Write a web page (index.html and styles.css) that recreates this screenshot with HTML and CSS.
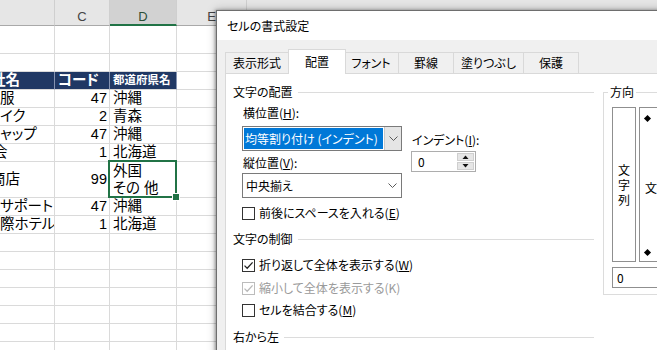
FILE: index.html
```html
<!DOCTYPE html>
<html lang="ja">
<head>
<meta charset="utf-8">
<title>セルの書式設定</title>
<link rel="stylesheet" href="styles.css">
</head>
<body>
<div class="sheet">
  <div class="row colhead">
    <div class="cell"></div><div class="cell">C</div><div class="cell sel">D</div><div class="cell">E</div><div class="cell"></div>
  </div>
  <div class="row r-top"><div class="cell"></div><div class="cell"></div><div class="cell"></div><div class="cell"></div><div class="cell"></div></div>
  <div class="row"><div class="cell"></div><div class="cell"></div><div class="cell"></div><div class="cell"></div><div class="cell"></div></div>
  <div class="row band">
    <div class="cell b"><span class="sh9">社名</span></div>
    <div class="cell">コード</div>
    <div class="cell small">都道府県名</div>
    <div class="cell plain"></div><div class="cell plain"></div>
  </div>
  <div class="row"><div class="cell b">服</div><div class="cell num">47</div><div class="cell">沖縄</div><div class="cell"></div><div class="cell"></div></div>
  <div class="row"><div class="cell b">イク</div><div class="cell num">2</div><div class="cell">青森</div><div class="cell"></div><div class="cell"></div></div>
  <div class="row"><div class="cell b">ャップ</div><div class="cell num">47</div><div class="cell">沖縄</div><div class="cell"></div><div class="cell"></div></div>
  <div class="row"><div class="cell b"><span class="sh7">会</span></div><div class="cell num">1</div><div class="cell">北海道</div><div class="cell"></div><div class="cell"></div></div>
  <div class="row tall"><div class="cell b"><span class="sh9">商店</span></div><div class="cell num">99</div><div class="cell selected"><div class="stack"><span>外国</span><span>その 他</span></div></div><div class="cell"></div><div class="cell"></div></div>
  <div class="row"><div class="cell b">サポート</div><div class="cell num">47</div><div class="cell">沖縄</div><div class="cell"></div><div class="cell"></div></div>
  <div class="row"><div class="cell b">際ホテル</div><div class="cell num">1</div><div class="cell">北海道</div><div class="cell"></div><div class="cell"></div></div>
  <div class="row"><div class="cell"></div><div class="cell"></div><div class="cell"></div><div class="cell"></div><div class="cell"></div></div>
  <div class="row"><div class="cell"></div><div class="cell"></div><div class="cell"></div><div class="cell"></div><div class="cell"></div></div>
  <div class="row"><div class="cell"></div><div class="cell"></div><div class="cell"></div><div class="cell"></div><div class="cell"></div></div>
  <div class="row"><div class="cell"></div><div class="cell"></div><div class="cell"></div><div class="cell"></div><div class="cell"></div></div>
  <div class="row"><div class="cell"></div><div class="cell"></div><div class="cell"></div><div class="cell"></div><div class="cell"></div></div>
  <div class="row"><div class="cell"></div><div class="cell"></div><div class="cell"></div><div class="cell"></div><div class="cell"></div></div>
  <div class="row"><div class="cell"></div><div class="cell"></div><div class="cell"></div><div class="cell"></div><div class="cell"></div></div>
</div>

<div class="dialog">
  <div class="titlebar">セルの書式設定</div>
  <div class="tabs">
    <div class="tab">表示形式</div>
    <div class="tab active">配置</div>
    <div class="tab">フォント</div>
    <div class="tab">罫線</div>
    <div class="tab">塗りつぶし</div>
    <div class="tab">保護</div>
  </div>
  <div class="panel">
    <div class="left">
      <div class="ghead"><span>文字の配置</span><i class="rule"></i></div>
      <div class="g1">
        <div class="g1-main">
          <div class="lbl l1">横位置(<u>H</u>):</div>
          <div class="combo focus c1">
            <div class="val">均等割り付け (インデント)</div>
            <div class="btn"><svg width="9" height="5" viewBox="0 0 9 5"><path d="M0.5 0.5 L4.5 4.5 L8.5 0.5" fill="none" stroke="#5a5a5a"/></svg></div>
          </div>
          <div class="lbl l2">縦位置(<u>V</u>):</div>
          <div class="combo c2">
            <div class="val">中央揃え</div>
            <div class="btn"><svg width="9" height="5" viewBox="0 0 9 5"><path d="M0.5 0.5 L4.5 4.5 L8.5 0.5" fill="none" stroke="#5a5a5a"/></svg></div>
          </div>
        </div>
        <div class="g1-side">
          <div class="lbl">インデント(<u>I</u>):</div>
          <div class="spin">
            <div class="val">0</div>
            <div class="arrows">
              <div class="arr"><svg width="7" height="4" viewBox="0 0 7 4"><path d="M0.5 4 L3.5 0.5 L6.5 4 Z" fill="#111"/></svg></div>
              <div class="arr"><svg width="7" height="4" viewBox="0 0 7 4"><path d="M0.5 0 L3.5 3.5 L6.5 0 Z" fill="#111"/></svg></div>
            </div>
          </div>
        </div>
      </div>
      <div class="cbrow m7"><span class="cb"></span>前後にスペースを入れる(<u>E</u>)</div>

      <div class="ghead m10"><span>文字の制御</span><i class="rule"></i></div>
      <div class="cbrow m10"><span class="cb"><svg width="11" height="11" viewBox="0 0 11 11"><path d="M1.5 5.6 L4.2 8.3 L9.6 2.4" fill="none" stroke="#222" stroke-width="1.3"/></svg></span>折り返して全体を表示する(<u>W</u>)</div>
      <div class="cbrow m7 disabled"><span class="cb"><svg width="11" height="11" viewBox="0 0 11 11"><path d="M1.5 5.6 L4.2 8.3 L9.6 2.4" fill="none" stroke="#b8b8b8" stroke-width="1.3"/></svg></span>縮小して全体を表示する(K)</div>
      <div class="cbrow m6"><span class="cb"></span>セルを結合する(<u>M</u>)</div>

      <div class="ghead m11"><span>右から左</span><i class="rule"></i></div>
    </div>

    <fieldset class="dir">
      <legend>方向</legend>
      <div class="orient">
        <div class="vbox"><span>文</span><span>字</span><span>列</span></div>
        <div class="dial">
          <i class="dot top"></i>
          <span class="dial-text">文字列</span>
          <i class="dot bottom"></i>
        </div>
      </div>
      <div class="deg">0</div>
    </fieldset>
  </div>
</div>
</body>
</html>
```

FILE: styles.css
```css
* { box-sizing: border-box; }
html, body { margin: 0; }
body {
  width: 657px;
  height: 350px;
  overflow: hidden;
  position: relative;
  background: #fff;
  font-family: "Liberation Sans", "Noto Sans CJK JP", sans-serif;
  font-feature-settings: "palt";
  color: #000;
}

/* ---------- spreadsheet ---------- */
.sheet { display: flex; flex-direction: column; }
.row {
  display: grid;
  grid-template-columns: 55px 55px 67px 70px 420px;
  height: 18px;
  flex: none;
}
.r-top { height: 28px; }
.tall { height: 36px; }
.cell {
  border-right: 1px solid #dadada;
  border-bottom: 1px solid #dadada;
  font-size: 14.5px;
  line-height: 17px;
  padding: 0 3px;
  white-space: nowrap;
  overflow: hidden;
  display: flex;
  align-items: center;
}
.cell.b { padding-left: 0; }
.cell.num { justify-content: flex-end; padding-right: 2px; }
.sh9 { margin-left: -9px; }
.sh7 { margin-left: -7px; }

.colhead { height: 26px; background: #e6e6e6; }
.colhead .cell {
  border-right-color: #cfcfcf;
  border-bottom-color: #a9a9a9;
  justify-content: center;
  align-items: flex-start;
  padding-top: 9px;
  font-size: 13px;
  line-height: 16px;
  color: #444;
}
.colhead .cell.sel {
  background: #d2d2d2;
  border-bottom: 2px solid #217346;
  color: #2d4f38;
}

.band .cell {
  background: #203864;
  color: #fff;
  font-weight: bold;
  border-right-color: #8593b1;
}
.band .cell.small { font-size: 11.5px; }
.band .cell.plain { background: #fff; border-right-color: #dadada; }

.stack { display: flex; flex-direction: column; line-height: 17px; }
.cell.selected { position: relative; overflow: visible; }
.cell.selected::after {
  content: "";
  position: absolute;
  left: -2px; top: -2px; right: -1px; bottom: -1px;
  border: 2px solid #217346;
}
.cell.selected::before {
  content: "";
  position: absolute;
  right: -4px; bottom: -4px;
  width: 6px; height: 6px;
  background: #217346;
  border: 1px solid #fff;
  z-index: 2;
}

/* ---------- dialog ---------- */
.dialog {
  position: absolute;
  left: 216px;
  top: 10px;
  width: 520px;
  height: 380px;
  border: 1px solid #6e6e6e;
  background: #f0f0f0;
  box-shadow: -1px 0 3px rgba(0,0,0,0.35), 0 0 9px rgba(0,0,0,0.25);
  display: flex;
  flex-direction: column;
  font-family: "Noto Sans CJK JP", sans-serif;
  font-size: 12px;
  line-height: 16px;
  color: #000;
}
.titlebar {
  height: 29px;
  background: #fff;
  padding-left: 10px;
  display: flex;
  align-items: center;
  flex: none;
}
.tabs {
  display: flex;
  align-items: flex-end;
  height: 33px;
  padding-left: 8px;
  flex: none;
}
.tab {
  height: 21px;
  min-width: 56px;
  padding: 0 7px;
  border: 1px solid #d9d9d9;
  border-bottom: 0;
  margin-left: -1px;
  display: flex;
  align-items: center;
  justify-content: center;
  background: #f0f0f0;
}
.tab:first-child { margin-left: 0; }
.tab.active {
  height: 25px;
  min-width: 58px;
  margin: 0 -2px -1px -1px;
  background: #fff;
  position: relative;
  z-index: 1;
}
.panel {
  flex: 1;
  margin-left: 8px;
  background: #fff;
  border: 1px solid #d9d9d9;
  display: flex;
  align-items: flex-start;
  gap: 9px;
  padding: 10px 0 0 7px;
}
.left { width: 361px; flex: none; }
.ghead { display: flex; align-items: center; height: 16px; }
.rule { flex: 1; height: 1px; background: #dcdcdc; margin-left: 5px; }
.m6 { margin-top: 6px; }
.m7 { margin-top: 7px; }
.m10 { margin-top: 10px; }
.m11 { margin-top: 11px; }

.g1 { display: flex; gap: 9px; padding-left: 9px; }
.g1-main { width: 160px; display: flex; flex-direction: column; }
.lbl { height: 16px; white-space: nowrap; padding-left: 1px; }
.l1 { margin-top: 5px; }
.l2 { margin-top: 4px; }
.combo {
  height: 25px;
  border: 1px solid #7a7a7a;
  background: #fff;
  display: flex;
}
.c1 { margin-top: 5px; }
.c2 { margin-top: 2px; }
.combo .val {
  flex: 1;
  margin: 1px;
  padding-left: 2px;
  display: flex;
  align-items: center;
  white-space: nowrap;
}
.combo.focus .val { background: #0078d7; color: #fff; padding-left: 1px; }
.combo .btn {
  width: 17px;
  display: flex;
  align-items: center;
  justify-content: center;
}
.combo.focus .btn { background: #e5e5e5; border-left: 1px solid #c8c8c8; }

.g1-side { display: flex; flex-direction: column; padding-top: 32px; }
.spin {
  margin-top: 3px;
  width: 65px;
  height: 21px;
  border: 1px solid #adadad;
  display: flex;
}
.spin .val { flex: 1; padding-left: 6px; display: flex; align-items: center; }
.spin .arrows {
  width: 18px;
  padding: 1px 1px 1px 0;
  display: flex;
  flex-direction: column;
  gap: 1px;
}
.arr {
  flex: 1;
  background: #e6e6e6;
  border: 1px solid #cfcfcf;
  display: flex;
  align-items: center;
  justify-content: center;
}

.cbrow {
  display: flex;
  align-items: center;
  height: 16px;
  padding-left: 9px;
  white-space: nowrap;
}
.cb {
  width: 13px;
  height: 13px;
  border: 1px solid #333;
  background: #fff;
  margin-right: 4px;
  display: flex;
  align-items: center;
  justify-content: center;
  flex: none;
}
.cbrow.disabled { color: #9a9a9a; }
.cbrow.disabled .cb { border-color: #bcbcbc; }

/* direction group */
.dir {
  margin: 0;
  width: 130px;
  flex: none;
  border: 1px solid #dcdcdc;
  padding: 0 0 6px 8px;
}
.dir legend { padding: 0 2px; margin-left: -4px; line-height: 16px; }
.orient { display: flex; gap: 3px; margin-top: 7px; }
.vbox {
  width: 24px;
  height: 155px;
  border: 1px solid #8f8f8f;
  display: flex;
  flex-direction: column;
  justify-content: center;
  align-items: center;
}
.vbox span { display: block; line-height: 15px; }
.dial {
  width: 100px;
  height: 155px;
  border: 1px solid #8f8f8f;
  position: relative;
}
.dot {
  position: absolute;
  left: 5px;
  width: 5px;
  height: 5px;
  background: #000;
  transform: rotate(45deg);
}
.dot.top { top: 8px; }
.dot.bottom { top: 142px; }
.dial-text { position: absolute; left: 5px; top: 72px; }
.deg {
  margin-top: 5px;
  width: 100px;
  height: 21px;
  border: 1px solid #8f8f8f;
  padding-left: 4px;
  display: flex;
  align-items: center;
}
```
